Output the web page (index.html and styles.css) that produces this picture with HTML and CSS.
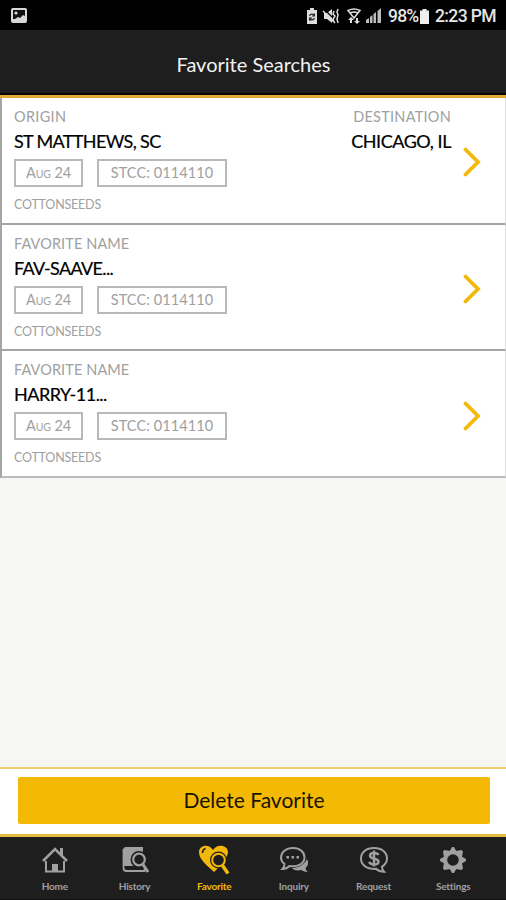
FILE: index.html
```html
<!DOCTYPE html>
<html lang="en">
<head>
<meta charset="utf-8">
<title>Favorite Searches</title>
<link rel="stylesheet" href="styles.css">
</head>
<body>
<div class="app">
  <div class="status">
    <svg class="pic" width="16" height="16" viewBox="0 0 16 16"><rect width="16" height="15" rx="2" fill="#d8d8d8"/><path d="M2 2h12v6l-2-1-3 3-2-1-3 2-2 0z" fill="#111"/><circle cx="5" cy="5" r="1.6" fill="#d8d8d8"/></svg>
    <svg class="sysicons" width="78" height="18" viewBox="0 0 78 18">
      <g fill="#ddd"><path d="M4 1h4v2h3v14H1V3h3z"/><path d="M18 6h3l5-4v14l-5-4h-3z"/></g>
      <path d="M3.500 9a2.600 2.600 0 0 1 5 0M8.500 11a2.600 2.600 0 0 1-5 0M8.500 6.500V9H6M3.500 13.500V11H6" fill="none" stroke="#222" stroke-width="1.100"/>
      <path d="M18.500 2.500l11 11" stroke="#000" stroke-width="1.200"/>
      <path d="M17 4l12 12M28 4l-1 3 2 2-2 3 1 3M32 2l-1 3 1 3-1 4 1 4" fill="none" stroke="#ddd" stroke-width="1.500"/>
      <g fill="none" stroke="#ddd" stroke-width="1.500"><path d="M42 3.500q6-3 12 0L48 11z M44 6q4-2 8 0"/></g>
      <path d="M44 16v-3h-2l3-3 3 3h-2v3zM50 11v3h-2l3 3 3-3h-2v-3z" fill="#ddd"/>
      <path d="M60 16v-3l3-2v5zM64 16v-6l2.500-2v8zM67.500 16V7L70 5v11zM71.500 16V4L75 1v15z" fill="#bbb"/>
    </svg>
    <span class="pct">98%</span>
    <svg class="batt" width="9" height="15" viewBox="0 0 9 15"><path d="M2.500 0h4v1.500H9V15H0V1.500h2.500z" fill="#eee"/></svg>
    <span class="time">2:23 PM</span>
  </div>
  <header class="header"><span class="title">Favorite Searches</span></header>
  <main class="list">
    <article class="card">
      <div class="info">
        <div class="row"><span class="label origin">ORIGIN</span><span class="label dest">DESTINATION</span></div>
        <div class="row"><span class="name">ST MATTHEWS, SC</span><span class="name city">CHICAGO, IL</span></div>
        <div class="chips"><span class="chip date">A<small>UG</small> 24</span><span class="chip code">STCC: 0114110</span></div>
        <div class="goods">COTTONSEEDS</div>
      </div>
      <svg class="chevron" width="18" height="30" viewBox="0 0 18 30"><path d="M2.500 2.500L15 15 2.500 27.500" fill="none" stroke="#f3b90a" stroke-width="3.800" stroke-linecap="round"/></svg>
    </article>
    <article class="card">
      <div class="info">
        <div class="row"><span class="label fav">FAVORITE NAME</span></div>
        <div class="row"><span class="name saave">FAV-SAAVE...</span></div>
        <div class="chips"><span class="chip date">A<small>UG</small> 24</span><span class="chip code">STCC: 0114110</span></div>
        <div class="goods">COTTONSEEDS</div>
      </div>
      <svg class="chevron" width="18" height="30" viewBox="0 0 18 30"><path d="M2.500 2.500L15 15 2.500 27.500" fill="none" stroke="#f3b90a" stroke-width="3.800" stroke-linecap="round"/></svg>
    </article>
    <article class="card">
      <div class="info">
        <div class="row"><span class="label fav">FAVORITE NAME</span></div>
        <div class="row"><span class="name harry">HARRY-11...</span></div>
        <div class="chips"><span class="chip date">A<small>UG</small> 24</span><span class="chip code">STCC: 0114110</span></div>
        <div class="goods">COTTONSEEDS</div>
      </div>
      <svg class="chevron" width="18" height="30" viewBox="0 0 18 30"><path d="M2.500 2.500L15 15 2.500 27.500" fill="none" stroke="#f3b90a" stroke-width="3.800" stroke-linecap="round"/></svg>
    </article>
  </main>
  <div class="action"><button class="delete" type="button">Delete Favorite</button></div>
  <nav class="nav">
    <a class="tab"><svg width="32" height="32" viewBox="0 0 32 32"><g fill="none" stroke="currentColor" stroke-width="2"><path d="M4 17L16 5l12 12" stroke-width="2.600"/><path d="M7 17v10.500h18V17"/></g><path d="M21 4h3v8l-3-3zM13 20h6v8h-6z" fill="currentColor"/></svg><span>Home</span></a>
    <a class="tab"><svg width="32" height="32" viewBox="0 0 32 32"><path d="M6 3h18v5a8 8 0 0 0-6 14H4V5z" fill="currentColor"/><path d="M4.500 5v19q0 3 3 3h18v-2" fill="none" stroke="currentColor" stroke-width="1.800"/><circle cx="20" cy="15.500" r="6" fill="#1e1e1e" stroke="#1e1e1e" stroke-width="5"/><circle cx="20" cy="15.500" r="5.800" fill="none" stroke="currentColor" stroke-width="2.200"/><path d="M24 20.500l5 7.500" stroke="currentColor" stroke-width="3"/></svg><span>History</span></a>
    <a class="tab active"><svg width="32" height="32" viewBox="0 0 32 32"><path d="M16 28C10 22 1 16 1 8c0-7 10-9 14-2 4-7 15-5 15 2 0 6-8 14-14 20z" fill="currentColor"/><path d="M4.500 9q0-3.500 3-4.500" fill="none" stroke="#1e1e1e" stroke-width="1.500"/><circle cx="20.500" cy="16" r="8.500" fill="#1e1e1e"/><circle cx="20.500" cy="16" r="6.300" fill="#1e1e1e" stroke="currentColor" stroke-width="2"/><path d="M25 22l5 7" stroke="#1e1e1e" stroke-width="6"/><path d="M24.500 21.500l5.500 8" stroke="currentColor" stroke-width="3.500"/></svg><span>Favorite</span></a>
    <a class="tab"><svg width="32" height="32" viewBox="0 0 32 32"><path d="M15 4C8 4 3 8 3 13.500c0 3 1.500 5 3.500 6.500 0 3-1 4-2 5 3 0 5-1 7-3 8 1 15-2 15-8.500C26.500 8 22 4 15 4z" fill="none" stroke="currentColor" stroke-width="2"/><path d="M8.500 12h2.500v2.500H8.500zm5 0h2.500v2.500h-2.500zm5 0h2.500v2.500h-2.500z" fill="currentColor"/><path d="M29 15c2 4 1 7-1.500 9 .5 2 1 3 2.500 4-3 0-5-1-7-2-3 1-7 .5-9-2 7 0 13-4 15-9z" fill="currentColor"/></svg><span>Inquiry</span></a>
    <a class="tab"><svg width="32" height="32" viewBox="0 0 32 32"><path d="M16 4C8 4 3 8.500 3 14.500S8 25 17 25l1-.3q3 3 8 3-2-2-2-5c3-2 5-4.500 5-8.200C29 8.500 24 4 16 4z" fill="none" stroke="currentColor" stroke-width="2"/><path d="M20.500 11q-1-2-4.500-2-4 0-4 2.700c0 4 8.500 2 8.500 5.800 0 3-3 3-4.500 3-3 0-4-1-5-2.500M16 6.500v16" fill="none" stroke="currentColor" stroke-width="2.500"/></svg><span>Request</span></a>
    <a class="tab"><svg width="32" height="32" viewBox="0 0 32 32"><circle cx="16" cy="16" r="7.800" fill="none" stroke="currentColor" stroke-width="4"/><path d="M12.500 7.500L15 3h2L19.500 7.500zM12.500 24.500L15 29h2l2.500-4.500zM7.500 12.500L3 15v2l4.500 2.500zM24.500 12.500L29 15v2l-4.500 2.500zM7 13L6 7.500 7.500 6 13 7zM19 7l5.500-1L26 7.500 25 13zM7 19l-1 5.500L7.500 26l5.500-1zM19 25l5.500 1 1.500-1.500-1-5.500z" fill="currentColor"/></svg><span>Settings</span></a>
  </nav>
</div>
</body>
</html>
```
FILE: styles.css
```css
* { box-sizing: border-box; }
body { margin: 0; font-family: Lato, sans-serif; }
.app { width: 506px; height: 900px; display: flex; flex-direction: column; background: #f6f6f2; overflow: hidden; }
svg { display: block; flex: none; }
.status { height: 30px; flex: none; background: #000; display: flex; align-items: center; padding: 2px 11px 0 11px; color: #e6e6e6; font: 500 17.5px/26px Roboto, sans-serif; white-space: nowrap; }
.sysicons { margin-left: auto; margin-right: 4px; }
.pct { width: 32px; letter-spacing: -0.8px; }
.batt { margin-right: 6px; }
.time { width: 60px; letter-spacing: -0.6px; }
.header { height: 68px; flex: none; background: #1e1e1e; border-bottom: 3px solid #e0ac35; box-shadow: inset 0 -2px #050508; display: flex; align-items: center; justify-content: center; padding: 3px 0 0 1px; }
.title { color: #f2f2f2; font-size: 20px; white-space: nowrap; }
.list { flex: 1; }
.card { height: 126.7px; border: solid #a5a5a5; border-width: 0 1px 2px 2px; border-right-color: #ddd; background: #fff; display: flex; align-items: center; padding: 0 24px 0 12px; }
.card:last-child { border-bottom-color: #bbb; }
.info { width: 437px; height: 100%; padding-top: 8px; }
.row { display: flex; justify-content: space-between; white-space: nowrap; }
.label { color: #a0a0a0; font-size: 14.5px; line-height: 21px; letter-spacing: 0.1px; }
.origin { letter-spacing: 0.3px; }
.dest { letter-spacing: 0.25px; }
.name { color: #000; font-size: 18px; line-height: 28px; letter-spacing: -0.65px; -webkit-text-stroke: 0.2px #000; }
.city { letter-spacing: -0.45px; }
.harry { letter-spacing: -0.5px; }
.chips { display: flex; gap: 14px; margin-top: 4px; }
.chip { height: 28px; border: 2px solid #b8b8b8; color: #a0a0a0; font-size: 14.5px; line-height: 24px; letter-spacing: 0.1px; text-align: center; white-space: nowrap; }
.chip small { font-size: 10.5px; }
.date { width: 69px; letter-spacing: -0.1px; }
.code { width: 130px; }
.goods { color: #a0a0a0; font-size: 12.5px; line-height: 18px; margin-top: 9px; letter-spacing: -0.2px; }
.chevron { margin: 4px 0 0 12px; }
.action { height: 70px; flex: none; background: #fff; border-top: 2px solid #efcb73; border-bottom: 3px solid #e8bb43; padding: 8px 16px 0 18px; }
.delete { display: block; width: 100%; height: 47px; border: 0; border-radius: 2px; background: #f3b905; color: #191400; font: 21px/44px Lato, sans-serif; padding: 0 0 2px; }
.nav { height: 63px; flex: none; background: #1e1e1e; border-bottom: 1px solid #111; display: flex; padding: 7px 13px 0 15px; }
.tab { flex: 1; display: flex; flex-direction: column; align-items: center; color: #a0a0a0; }
.tab span { font-size: 10px; line-height: 12px; margin-top: 4px; font-weight: 700; letter-spacing: -0.2px; }
.active { color: #f3b90a; }
```
